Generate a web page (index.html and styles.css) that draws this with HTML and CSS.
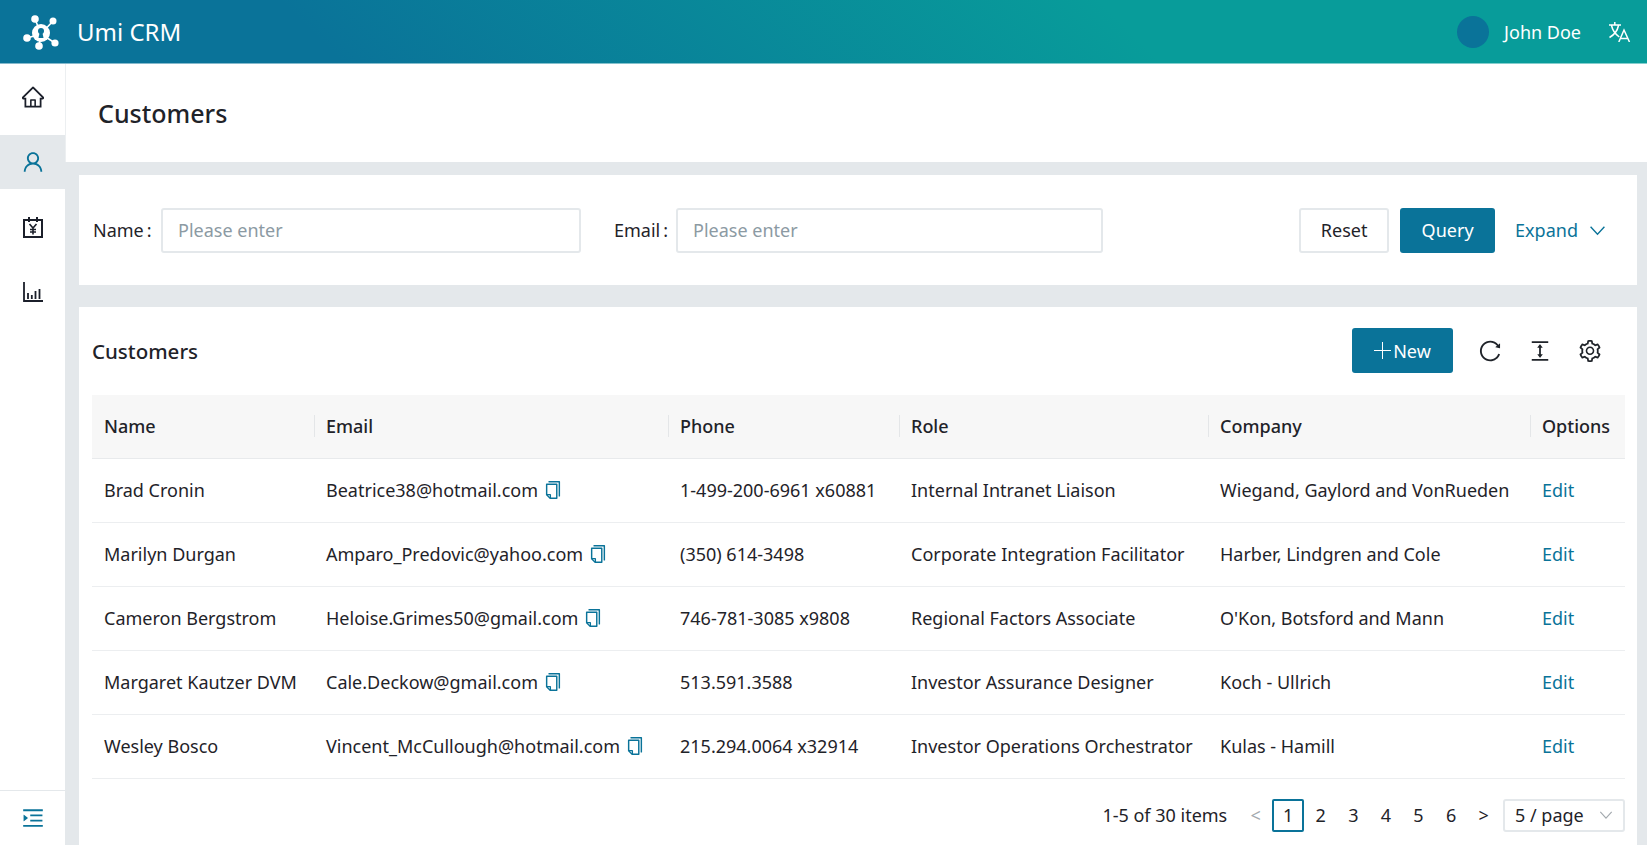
FILE: index.html
```html
<!DOCTYPE html>
<html lang="en">
<head>
    <meta charset="UTF-8">
    <meta name="viewport" content="width=device-width, initial-scale=1.0">
    <title>Umi CRM</title>
    <link rel="stylesheet" href="styles.css">
</head>
<body>
    <svg class="sprite" aria-hidden="true">
        <symbol id="i-home" viewBox="64 64 896 896"><path d="M946.5 505L560.1 118.8l-25.9-25.9a31.5 31.5 0 0 0-44.4 0L77.5 505a63.9 63.9 0 0 0-18.8 46c.4 35.2 29.7 63.3 64.9 63.3h42.5V940h691.8V614.3h43.4c17.1 0 33.2-6.7 45.3-18.8a63.6 63.6 0 0 0 18.7-45.3c0-17-6.7-33.1-18.8-45.2zM568 868H456V664h112v204zm217.9-325.7V868H632V640c0-22.1-17.9-40-40-40H432c-22.1 0-40 17.9-40 40v228H238.1V542.3h-96l370-369.7 23.1 23.1L882 542.3h-96.1z"/></symbol>
        <symbol id="i-user" viewBox="64 64 896 896"><path d="M858.5 763.6a374 374 0 0 0-80.6-119.5 375.63 375.63 0 0 0-119.5-80.6c-.4-.2-.8-.3-1.2-.5C719.5 518 760 444.7 760 362c0-137-111-248-248-248S264 225 264 362c0 82.7 40.5 156 102.8 201.1-.4.2-.8.3-1.2.5-44.8 18.9-85 46-119.5 80.6a375.63 375.63 0 0 0-80.6 119.5A371.7 371.7 0 0 0 136 901.8a8 8 0 0 0 8 8.2h60c4.4 0 7.9-3.5 8-7.8 2-77.2 33-149.5 87.8-204.3 56.7-56.7 132-87.9 212.2-87.9s155.5 31.2 212.2 87.9C779 752.7 810 825 812 902.2c.1 4.4 3.6 7.8 8 7.8h60a8 8 0 0 0 8-8.2c-1-47.8-10.9-94.3-29.5-138.2zM512 534c-45.9 0-89.1-17.9-121.6-50.4S340 407.9 340 362c0-45.9 17.9-89.1 50.4-121.6S466.1 190 512 190s89.1 17.9 121.6 50.4S684 316.1 684 362c0 45.9-17.9 89.1-50.4 121.6S557.9 534 512 534z"/></symbol>
        <symbol id="i-copy" viewBox="64 64 896 896"><path d="M832 64H296c-4.4 0-8 3.6-8 8v56c0 4.4 3.6 8 8 8h496v688c0 4.4 3.6 8 8 8h56c4.4 0 8-3.6 8-8V96c0-17.7-14.3-32-32-32zM704 192H192c-17.7 0-32 14.3-32 32v530.7c0 8.5 3.4 16.6 9.4 22.6l173.3 173.3c2.2 2.2 4.7 4 7.4 5.5v1.9h4.2c3.5 1.3 7.2 2 11 2H704c17.7 0 32-14.3 32-32V224c0-17.7-14.3-32-32-32zM350 856.2L263.9 770H350v86.2zM664 888H414V746c0-22.1-17.9-40-40-40H232V264h432v624z"/></symbol>
        <symbol id="i-reload" viewBox="64 64 896 896"><path d="M909.1 209.3l-56.4 44.1C775.8 155.1 656.2 92 521.9 92 290 92 102.3 279.5 102 511.5 101.7 743.7 289.8 932 521.9 932c181.3 0 335.8-115 394.6-276.1 1.5-4.2-.7-8.9-4.9-10.3l-56.7-19.5a8 8 0 0 0-10.1 4.8c-1.8 5-3.8 10-5.9 14.9-17.3 41-42.1 77.8-73.7 109.4A344.77 344.77 0 0 1 655.9 829c-42.3 17.9-87.4 27-133.8 27-46.5 0-91.5-9.1-133.8-27A341.5 341.5 0 0 1 279 755.2a342.16 342.16 0 0 1-73.7-109.4c-17.9-42.4-27-87.4-27-133.9s9.1-91.5 27-133.9c17.3-41 42.1-77.8 73.7-109.4 31.6-31.6 68.4-56.4 109.3-73.8 42.3-17.9 87.4-27 133.8-27 46.5 0 91.5 9.1 133.8 27a341.5 341.5 0 0 1 109.3 73.8c9.9 9.9 19.2 20.4 27.8 31.4l-60.2 47a8 8 0 0 0 3 14.1l175.6 43c5 1.2 9.9-2.6 9.9-7.7l.8-180.9c-.1-6.6-7.8-10.3-13-6.2z"/></symbol>
        <symbol id="i-height" viewBox="64 64 896 896"><path d="M840 836H184c-4.4 0-8 3.6-8 8v60c0 4.4 3.6 8 8 8h656c4.4 0 8-3.6 8-8v-60c0-4.4-3.6-8-8-8zm0-724H184c-4.4 0-8 3.6-8 8v60c0 4.4 3.6 8 8 8h656c4.4 0 8-3.6 8-8v-60c0-4.4-3.6-8-8-8zM610.8 378c6 0 9.4-7 5.7-11.7L515.7 238.7a7.14 7.14 0 0 0-11.3 0L403.6 366.3a7.23 7.23 0 0 0 5.7 11.7H476v268h-62.8c-6 0-9.4 7-5.7 11.7l100.8 127.5c2.9 3.7 8.5 3.7 11.3 0l100.8-127.5c3.7-4.7.4-11.7-5.7-11.7H548V378h62.8z"/></symbol>
        <symbol id="i-setting" viewBox="64 64 896 896"><path d="M924.8 625.7l-65.5-56c3.1-19 4.7-38.4 4.7-57.8s-1.6-38.8-4.7-57.8l65.5-56a32.03 32.03 0 0 0 9.3-35.2l-.9-2.6a443.74 443.74 0 0 0-79.7-137.9l-1.8-2.1a32.12 32.12 0 0 0-35.1-9.5l-81.3 28.9c-30-24.6-63.5-44-99.7-57.6l-15.7-85a32.05 32.05 0 0 0-25.8-25.7l-2.7-.5c-52.1-9.4-106.9-9.4-159 0l-2.7.5a32.05 32.05 0 0 0-25.8 25.7l-15.8 85.4a351.86 351.86 0 0 0-99 57.4l-81.9-29.1a32 32 0 0 0-35.1 9.5l-1.8 2.1a446.02 446.02 0 0 0-79.7 137.9l-.9 2.6c-4.5 12.5-.8 26.5 9.3 35.2l66.3 56.6c-3.1 18.8-4.6 38-4.6 57.1 0 19.2 1.5 38.4 4.6 57.1L99 625.5a32.03 32.03 0 0 0-9.3 35.2l.9 2.6c18.1 50.4 44.9 96.9 79.7 137.9l1.8 2.1a32.12 32.12 0 0 0 35.1 9.5l81.9-29.1c29.8 24.5 63.1 43.9 99 57.4l15.8 85.4a32.05 32.05 0 0 0 25.8 25.7l2.7.5a449.4 449.4 0 0 0 159 0l2.7-.5a32.05 32.05 0 0 0 25.8-25.7l15.7-85a350 350 0 0 0 99.7-57.6l81.3 28.9a32 32 0 0 0 35.1-9.5l1.8-2.1c34.8-41.1 61.6-87.5 79.7-137.9l.9-2.6c4.5-12.3.8-26.3-9.3-35zM788.3 465.9c2.5 15.1 3.8 30.6 3.8 46.1s-1.3 31-3.8 46.1l-6.6 40.1 74.7 63.9a370.03 370.03 0 0 1-42.6 73.6L721 702.8l-31.4 25.8c-23.9 19.6-50.5 35-79.3 45.8l-38.1 14.3-17.9 97a377.5 377.5 0 0 1-85 0l-17.9-97.2-37.8-14.5c-28.5-10.8-55-26.2-78.7-45.7l-31.4-25.9-93.4 33.2c-17-22.9-31.2-47.6-42.6-73.6l75.5-64.5-6.5-40c-2.4-14.9-3.7-30.3-3.7-45.5 0-15.3 1.2-30.6 3.7-45.5l6.5-40-75.5-64.5c11.3-26.1 25.6-50.7 42.6-73.6l93.4 33.2 31.4-25.9c23.7-19.5 50.2-34.9 78.7-45.7l37.9-14.3 17.9-97.2c28.1-3.2 56.8-3.2 85 0l17.9 97 38.1 14.3c28.7 10.8 55.4 26.2 79.3 45.8l31.4 25.8 92.8-32.9c17 22.9 31.2 47.6 42.6 73.6L781.8 426l6.5 39.9zM512 326c-97.2 0-176 78.8-176 176s78.8 176 176 176 176-78.8 176-176-78.8-176-176-176zm79.2 255.2A111.6 111.6 0 0 1 512 614c-29.9 0-58-11.7-79.2-32.8A111.6 111.6 0 0 1 400 502c0-29.9 11.7-58 32.8-79.2C454 401.6 482.1 390 512 390c29.9 0 58 11.6 79.2 32.8A111.6 111.6 0 0 1 624 502c0 29.9-11.7 58-32.8 79.2z"/></symbol>
        <symbol id="i-unfold" viewBox="64 64 896 896"><path d="M408 442h480c4.4 0 8-3.6 8-8v-56c0-4.4-3.6-8-8-8H408c-4.4 0-8 3.6-8 8v56c0 4.4 3.6 8 8 8zm-8 204c0 4.4 3.6 8 8 8h480c4.4 0 8-3.6 8-8v-56c0-4.4-3.6-8-8-8H408c-4.4 0-8 3.6-8 8v56zm504-486H120c-4.4 0-8 3.6-8 8v56c0 4.4 3.6 8 8 8h784c4.4 0 8-3.6 8-8v-56c0-4.4-3.6-8-8-8zm0 632H120c-4.4 0-8 3.6-8 8v56c0 4.4 3.6 8 8 8h784c4.4 0 8-3.6 8-8v-56c0-4.4-3.6-8-8-8zM142.4 642.1L298.7 519a8.84 8.84 0 0 0 0-13.9L142.4 381.9c-5.8-4.6-14.4-.5-14.4 6.9v246.3a8.9 8.9 0 0 0 14.4 7z"/></symbol>
        <symbol id="i-down" viewBox="0 0 16 16"><path d="M1.5 4.5L8 11.5l6.5-7" fill="none" stroke="currentColor" stroke-width="1.3"/></symbol>
    </svg>

    <header class="topbar">
        <div class="brand">
            <svg class="logo" viewBox="20 10 40 40">
                <g stroke="#fff" stroke-width="1.6">
                    <line x1="41" y1="32" x2="35" y2="17"/>
                    <line x1="41" y1="32" x2="53" y2="19"/>
                    <line x1="41" y1="32" x2="27" y2="36"/>
                    <line x1="41" y1="32" x2="39" y2="44"/>
                    <line x1="41" y1="32" x2="55" y2="41"/>
                </g>
                <g fill="#fff">
                    <circle cx="35" cy="17" r="3.800"/>
                    <circle cx="53" cy="19" r="3.500"/>
                    <circle cx="27" cy="36" r="3.800"/>
                    <circle cx="39" cy="44" r="3.800"/>
                    <circle cx="55" cy="41" r="3.600"/>
                    <circle cx="41" cy="31" r="9"/>
                </g>
                <g fill="#0a7399">
                    <circle cx="41" cy="29" r="3"/>
                    <path d="M39.500 31h3l1 5h-5z"/>
                </g>
            </svg>
            <span class="brand-name">Umi CRM</span>
        </div>
        <div class="account">
            <span class="avatar"></span>
            <span class="account-name">John Doe</span>
            <svg class="lang" viewBox="0 0 22 20">
                <g fill="none" stroke="#fff" stroke-width="1.500">
                    <path d="M0 3h12M5.800 0v3M2.500 3.500c1 4.500 3.500 8.500 7.800 11.500M9.500 3.500c-1 5-3.800 9-9 12"/>
                    <path d="M9.800 20l5.200-12 5.500 12M11.500 16.500h7.500"/>
                </g>
            </svg>
        </div>
    </header>

    <div class="shell">
        <aside class="sider">
            <nav class="side-nav">
                <a class="side-item"><svg class="side-icon"><use href="#i-home"/></svg></a>
                <a class="side-item active"><svg class="side-icon"><use href="#i-user"/></svg></a>
                <a class="side-item">
                    <svg class="side-icon" viewBox="0 0 22 22">
                        <g fill="none" stroke="currentColor" stroke-width="2">
                            <path d="M2 4h18v17H2zM7 1v5M15 1v5"/>
                            <path d="M7.500 8l3.500 4 3.500-4M11 12v6.500M8 13.500h6M8 16h6" stroke-width="1.600"/>
                        </g>
                    </svg>
                </a>
                <a class="side-item">
                    <svg class="side-icon" viewBox="0 0 22 22">
                        <g fill="none" stroke="currentColor" stroke-width="1.800">
                            <path d="M2 1v19h19"/>
                            <path d="M6 12v6M9.800 14v4M13.500 10v8M17.500 8v10"/>
                        </g>
                    </svg>
                </a>
            </nav>
            <div class="side-foot"><svg class="side-icon unfold"><use href="#i-unfold"/></svg></div>
        </aside>

        <main class="content">
            <div class="page-head"><h1>Customers</h1></div>

            <div class="body-wrap">
                <section class="card search">
                    <label class="field-label name-label">Name<span class="colon">:</span></label>
                    <input class="field" type="text" placeholder="Please enter">
                    <label class="field-label email-label">Email<span class="colon">:</span></label>
                    <input class="field email-field" type="text" placeholder="Please enter">
                    <div class="search-actions">
                        <button class="btn">Reset</button>
                        <button class="btn primary query">Query</button>
                        <a class="expand">Expand <svg class="down"><use href="#i-down"/></svg></a>
                    </div>
                </section>

                <section class="card list">
                    <div class="list-head">
                        <h2>Customers</h2>
                        <div class="tools">
                            <button class="btn primary add"><span class="plus"></span>New</button>
                            <svg class="tool"><use href="#i-reload"/></svg>
                            <svg class="tool"><use href="#i-height"/></svg>
                            <svg class="tool"><use href="#i-setting"/></svg>
                        </div>
                    </div>

                    <table class="grid">
                        <colgroup>
                            <col class="c-name"><col class="c-email"><col class="c-phone"><col class="c-role"><col class="c-company"><col>
                        </colgroup>
                        <thead>
                            <tr><th>Name</th><th>Email</th><th>Phone</th><th>Role</th><th>Company</th><th>Options</th></tr>
                        </thead>
                        <tbody>
                            <tr>
                                <td>Brad Cronin</td>
                                <td>Beatrice38@hotmail.com <svg class="copy"><use href="#i-copy"/></svg></td>
                                <td>1-499-200-6961 x60881</td>
                                <td>Internal Intranet Liaison</td>
                                <td>Wiegand, Gaylord and VonRueden</td>
                                <td><a class="edit">Edit</a></td>
                            </tr>
                            <tr>
                                <td>Marilyn Durgan</td>
                                <td>Amparo_Predovic@yahoo.com <svg class="copy"><use href="#i-copy"/></svg></td>
                                <td>(350) 614-3498</td>
                                <td>Corporate Integration Facilitator</td>
                                <td>Harber, Lindgren and Cole</td>
                                <td><a class="edit">Edit</a></td>
                            </tr>
                            <tr>
                                <td>Cameron Bergstrom</td>
                                <td>Heloise.Grimes50@gmail.com <svg class="copy"><use href="#i-copy"/></svg></td>
                                <td>746-781-3085 x9808</td>
                                <td>Regional Factors Associate</td>
                                <td>O'Kon, Botsford and Mann</td>
                                <td><a class="edit">Edit</a></td>
                            </tr>
                            <tr>
                                <td>Margaret Kautzer DVM</td>
                                <td>Cale.Deckow@gmail.com <svg class="copy"><use href="#i-copy"/></svg></td>
                                <td>513.591.3588</td>
                                <td>Investor Assurance Designer</td>
                                <td>Koch - Ullrich</td>
                                <td><a class="edit">Edit</a></td>
                            </tr>
                            <tr>
                                <td>Wesley Bosco</td>
                                <td>Vincent_McCullough@hotmail.com <svg class="copy"><use href="#i-copy"/></svg></td>
                                <td>215.294.0064 x32914</td>
                                <td>Investor Operations Orchestrator</td>
                                <td>Kulas - Hamill</td>
                                <td><a class="edit">Edit</a></td>
                            </tr>
                        </tbody>
                    </table>

                    <div class="pager">
                        <span class="total">1-5 of 30 items</span>
                        <span class="page arrow muted">&lt;</span>
                        <span class="page current">1</span>
                        <span class="page">2</span>
                        <span class="page">3</span>
                        <span class="page">4</span>
                        <span class="page">5</span>
                        <span class="page">6</span>
                        <span class="page arrow">&gt;</span>
                        <span class="size">5 / page <svg class="size-down"><use href="#i-down"/></svg></span>
                    </div>
                </section>
            </div>
        </main>
    </div>
</body>
</html>
```

FILE: styles.css
```css
* {
    box-sizing: border-box;
}
html, body {
    height: 100%;
}
body {
    margin: 0;
    overflow: hidden;
    font-family: "Noto Sans", "Open Sans", sans-serif;
    font-size: 18px;
    color: #1f2329;
    background: #fff;
}
.sprite {
    display: none;
}
svg {
    fill: currentColor;
}

/* top bar */
.topbar {
    height: 64px;
    display: flex;
    align-items: center;
    justify-content: space-between;
    padding: 0 16px 0 20px;
    color: #fff;
    border-bottom: 1px solid rgba(255, 255, 255, 0.5);
    background: linear-gradient(45deg, #0a7399 20%, #089c9a 68%);
}
.brand {
    display: flex;
    align-items: center;
    gap: 17px;
}
.logo {
    width: 40px;
    height: 40px;
}
.brand-name {
    font-size: 24px;
}
.account {
    display: flex;
    align-items: center;
}
.avatar {
    width: 32px;
    height: 32px;
    border-radius: 50%;
    background: #0a7399;
}
.account-name {
    margin-left: 15px;
}
.lang {
    width: 22px;
    height: 20px;
    margin-left: 28px;
}

/* layout */
.shell {
    display: flex;
    height: calc(100% - 64px);
}
.sider {
    width: 65px;
    display: flex;
    flex-direction: column;
    justify-content: space-between;
    flex: none;
    background: #fff;
    box-shadow: 1px 0 0 #eceff1;
}
.side-nav {
    padding-top: 6px;
    display: flex;
    flex-direction: column;
    gap: 11px;
}
.side-item {
    height: 54px;
    display: flex;
    align-items: center;
    justify-content: center;
    color: #1b1f2a;
}
.side-item.active {
    background: #e4e8eb;
    color: #0a7399;
}
.side-icon {
    width: 22px;
    height: 22px;
}
.side-foot {
    height: 55px;
    display: flex;
    align-items: center;
    justify-content: center;
    border-top: 1px solid #e4e8eb;
    color: #0a7399;
}
.content {
    flex: 1;
    min-width: 0;
    display: flex;
    flex-direction: column;
}
.page-head {
    height: 98px;
    flex: none;
    padding: 0 33px;
    display: flex;
    align-items: center;
}
.page-head h1 {
    margin: 0;
    font-size: 25px;
    font-weight: 500;
}
.body-wrap {
    flex: 1;
    padding: 13px 10px 0 14px;
    background: #e4e8eb;
}
.card {
    background: #fff;
}

/* search */
.search {
    height: 110px;
    display: flex;
    align-items: center;
    padding: 0 14px;
}
.field-label {
    white-space: nowrap;
}
.colon {
    margin-left: 3px;
}
.name-label {
    width: 68px;
}
.email-label {
    width: 62px;
    margin-left: 33px;
}
.field {
    width: 420px;
    height: 45px;
    padding: 0 15px;
    border: 2px solid #e4e8eb;
    border-radius: 3px;
    font: inherit;
    outline: none;
}
.email-field {
    width: 427px;
}
.field::placeholder {
    color: #8c9aa3;
}
.search-actions {
    margin-left: auto;
    display: flex;
    align-items: center;
}
.btn {
    height: 45px;
    width: 90px;
    border: 2px solid #e4e8eb;
    border-radius: 3px;
    background: #fff;
    color: #1f2329;
    font: inherit;
}
.btn.primary {
    border: none;
    background: #0a7399;
    color: #fff;
}
.query {
    width: 95px;
    margin-left: 11px;
}
.expand {
    margin-left: 20px;
    margin-right: 17px;
    display: flex;
    align-items: center;
    gap: 11px;
    color: #0a7399;
}
.down {
    width: 17px;
    height: 17px;
}

/* list */
.list {
    margin-top: 22px;
    padding: 0 12px 13px 13px;
}
.list-head {
    height: 88px;
    display: flex;
    align-items: center;
    justify-content: space-between;
}
.list-head h2 {
    margin: 0;
    font-size: 20.500px;
    font-weight: 500;
}
.tools {
    display: flex;
    align-items: center;
    padding-right: 24px;
    margin-top: -1px;
}
.add {
    width: 101px;
    display: flex;
    align-items: center;
    justify-content: center;
    gap: 2px;
    margin-right: 26px;
}
.plus {
    position: relative;
    width: 17px;
    height: 17px;
}
.plus::before, .plus::after {
    content: "";
    position: absolute;
    background: #fff;
}
.plus::before {
    left: 0;
    right: 0;
    top: 8px;
    height: 1px;
}
.plus::after {
    top: 0;
    bottom: 0;
    left: 8px;
    width: 1px;
}
.tool {
    width: 22px;
    height: 22px;
    margin-right: 28px;
    color: #1f2329;
}
.tool:last-child {
    margin-right: 0;
}

/* table */
.grid {
    width: 100%;
    table-layout: fixed;
    border-collapse: collapse;
}
.c-name { width: 223px; }
.c-email { width: 354px; }
.c-phone { width: 231px; }
.c-role { width: 309px; }
.c-company { width: 322px; }
.grid th {
    position: relative;
    height: 63px;
    padding: 0 11px;
    text-align: left;
    font-weight: 500;
    background: #f7f7f7;
    border-bottom: 1px solid #e8eaec;
}
.grid th:first-child, .grid td:first-child {
    padding-left: 12px;
}
.grid th + th::before {
    content: "";
    position: absolute;
    left: -1px;
    top: 20px;
    height: 22px;
    width: 1px;
    background: #e4e6e8;
}
.grid td {
    height: 64px;
    padding: 0 11px;
    white-space: nowrap;
    border-bottom: 1px solid #eceef0;
}
.copy {
    width: 18px;
    height: 18px;
    margin-left: 1px;
    vertical-align: -2px;
    color: #0a7399;
}
.edit {
    color: #0a7399;
}

/* pagination */
.pager {
    display: flex;
    align-items: center;
    justify-content: flex-end;
    margin-top: 20px;
}
.total {
    margin-right: 12px;
}
.page {
    width: 32.600px;
    height: 33px;
    display: flex;
    align-items: center;
    justify-content: center;
}
.page.muted {
    color: #a3a9ae;
}
.page.current {
    border: 2px solid #0a7399;
    border-radius: 2px;
}
.size {
    width: 122px;
    height: 33px;
    margin-left: 3px;
    display: flex;
    align-items: center;
    justify-content: space-between;
    padding: 0 10px;
    border: 2px solid #e4e8eb;
    border-radius: 3px;
}
.size-down {
    width: 14px;
    height: 14px;
    color: #a3a9ae;
}
```
